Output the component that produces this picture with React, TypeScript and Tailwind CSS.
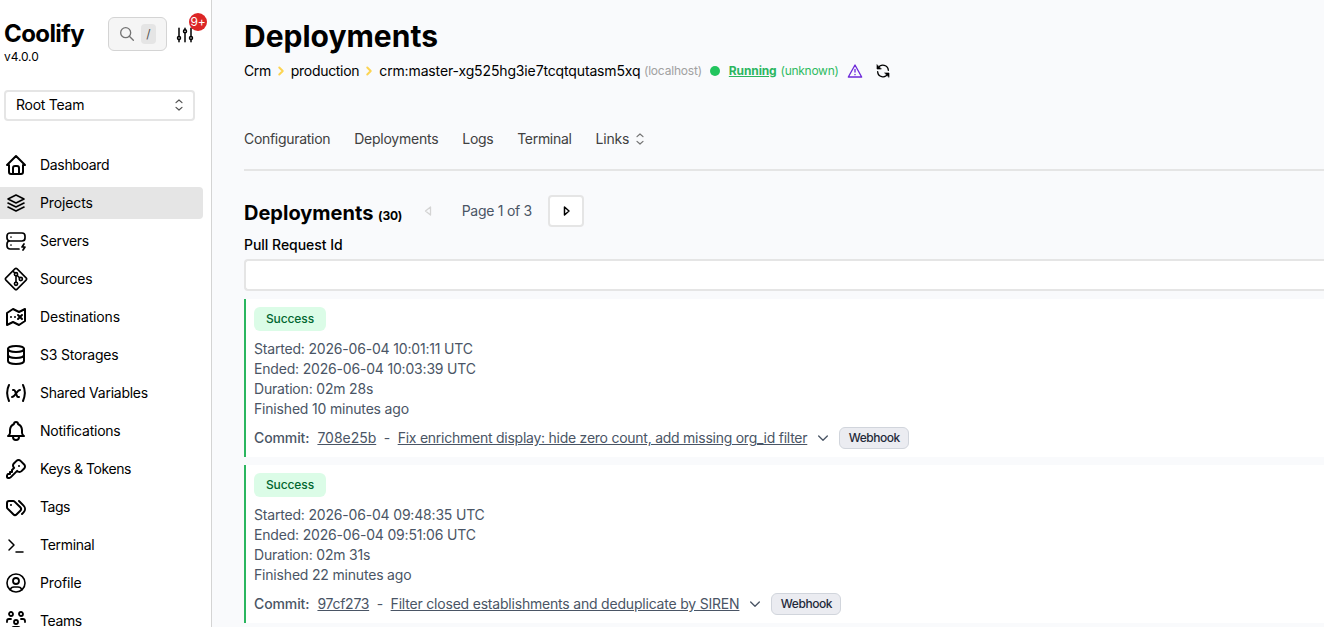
import type { ReactNode } from "react";

interface NavItem {
  label: string;
  icon: ReactNode;
  tracking: string;
  active?: boolean;
}

interface Deployment {
  id: string;
  started: string;
  ended: string;
  duration: string;
  finished: string;
  message: string;
  idTracking: string;
  messageTracking: string;
}

function Icon({ children, className = "size-6" }: { children: ReactNode; className?: string }) {
  return (
    <svg
      className={`shrink-0 ${className}`}
      viewBox="0 0 24 24"
      fill="none"
      stroke="currentColor"
      strokeWidth="2"
      strokeLinecap="round"
      strokeLinejoin="round"
    >
      {children}
    </svg>
  );
}

const NAV_ITEMS: NavItem[] = [
  {
    label: "Dashboard",
    tracking: "tracking-[-0.32px]",
    icon: (
      <Icon>
        <path d="M5 12H3l9-9l9 9h-2M5 12v7a2 2 0 0 0 2 2h10a2 2 0 0 0 2-2v-7" />
        <path d="M9 21v-6a2 2 0 0 1 2-2h2a2 2 0 0 1 2 2v6" />
      </Icon>
    ),
  },
  {
    label: "Projects",
    tracking: "tracking-[-0.12px]",
    active: true,
    icon: (
      <Icon>
        <path strokeWidth="1.6" d="m12 4l-8 4l8 4l8-4zM4 12l8 4l8-4M4 16l8 4l8-4" />
      </Icon>
    ),
  },
  {
    label: "Servers",
    tracking: "tracking-[-0.32px]",
    icon: (
      <Icon>
        <path
          strokeWidth="1.7"
          d="M3 7a3 3 0 0 1 3-3h12a3 3 0 0 1 3 3v2a3 3 0 0 1-3 3H6a3 3 0 0 1-3-3zM15 20H6a3 3 0 0 1-3-3v-2a3 3 0 0 1 3-3h12M7 8v.01M7 16v.01M20 15l-2 3h3l-2 3"
        />
      </Icon>
    ),
  },
  {
    label: "Sources",
    tracking: "tracking-[-0.28px]",
    icon: (
      <svg className="size-6 shrink-0" viewBox="0 0 15 15" fill="none" stroke="currentColor">
        <path d="M6.793 1.207L1.207 6.793a1 1 0 0 0 0 1.414l5.586 5.586a1 1 0 0 0 1.414 0l5.586-5.586a1 1 0 0 0 0-1.414L8.207 1.207a1 1 0 0 0-1.414 0Z" />
        <path d="M7.5 5.5v4M5.5 2.5L7 4M8 5l2 2" />
        <circle cx="7.5" cy="4.5" r="1" />
        <circle cx="7.5" cy="10.5" r="1" />
        <circle cx="10.5" cy="7.5" r="1" />
      </svg>
    ),
  },
  {
    label: "Destinations",
    tracking: "tracking-[-0.16px]",
    icon: (
      <Icon>
        <path d="M9 4L3 8v12l6-3l6 3l6-4V4l-6 3l-6-3zm-2 8.001V12m4 .001V12m3-2l2 2m2 2l-2-2m0 0l2-2m-2 2l-2 2" />
      </Icon>
    ),
  },
  {
    label: "S3 Storages",
    tracking: "tracking-[-0.2px]",
    icon: (
      <Icon>
        <ellipse cx="12" cy="6" rx="8" ry="3" />
        <path d="M4 6v6c0 1.657 3.582 3 8 3s8-1.343 8-3V6" />
        <path d="M4 12v6c0 1.657 3.582 3 8 3s8-1.343 8-3v-6" />
      </Icon>
    ),
  },
  {
    label: "Shared Variables",
    tracking: "tracking-[-0.25px]",
    icon: (
      <Icon>
        <path d="M5 4C2.5 9 2.5 14 5 20M19 4c2.5 5 2.5 10 0 16M9 9h1c1 0 1 1 2.016 3.527C13 15 13 16 14 16h1" />
        <path d="M8 16c1.5 0 3-2 4-3.5S14.5 9 16 9" />
      </Icon>
    ),
  },
  {
    label: "Notifications",
    tracking: "tracking-[-0.23px]",
    icon: (
      <Icon>
        <path d="M10 5a2 2 0 0 1 4 0a7 7 0 0 1 4 6v3a4 4 0 0 0 2 3H4a4 4 0 0 0 2-3v-3a7 7 0 0 1 4-6M9 17v1a3 3 0 0 0 6 0v-1" />
      </Icon>
    ),
  },
  {
    label: "Keys & Tokens",
    tracking: "tracking-[-0.41px]",
    icon: (
      <Icon>
        <path d="m16.555 3.843l3.602 3.602a2.877 2.877 0 0 1 0 4.069l-2.643 2.643a2.877 2.877 0 0 1-4.069 0l-.301-.301l-6.558 6.558a2 2 0 0 1-1.239.578L5.172 21H4a1 1 0 0 1-.993-.883L3 20v-1.172a2 2 0 0 1 .467-1.284l.119-.13L4 17h2v-2h2v-2l2.144-2.144l-.301-.301a2.877 2.877 0 0 1 0-4.069l2.643-2.643a2.877 2.877 0 0 1 4.069 0M15 9h.01" />
      </Icon>
    ),
  },
  {
    label: "Tags",
    tracking: "tracking-[-0.45px]",
    icon: (
      <Icon>
        <path d="M3 8v4.172a2 2 0 0 0 .586 1.414l5.71 5.71a2.41 2.41 0 0 0 3.408 0l3.592-3.592a2.41 2.41 0 0 0 0-3.408l-5.71-5.71A2 2 0 0 0 9.172 6H5a2 2 0 0 0-2 2" />
        <path d="m18 19l1.592-1.592a4.82 4.82 0 0 0 0-6.816L15 6M7 10h-.01" />
      </Icon>
    ),
  },
  {
    label: "Terminal",
    tracking: "tracking-[-0.3px]",
    icon: (
      <Icon>
        <path strokeWidth="1.5" d="m5 7l5 5l-5 5M12 19h7" />
      </Icon>
    ),
  },
  {
    label: "Profile",
    tracking: "tracking-[-0.15px]",
    icon: (
      <Icon>
        <circle cx="12" cy="12" r="9" strokeWidth="1.6" />
        <circle cx="12" cy="10" r="3" strokeWidth="1.8" />
        <path strokeWidth="1.6" d="M6.168 18.849A4 4 0 0 1 10 16h4a4 4 0 0 1 3.834 2.855" />
      </Icon>
    ),
  },
  {
    label: "Teams",
    tracking: "tracking-[-0.4px]",
    icon: (
      <Icon>
        <path
          strokeWidth="1.8"
          d="M10 13a2 2 0 1 0 4 0a2 2 0 0 0-4 0M8 21v-1a2 2 0 0 1 2-2h4a2 2 0 0 1 2 2v1M15 5a2 2 0 1 0 4 0a2 2 0 0 0-4 0M17 10h2a2 2 0 0 1 2 2v1M5 5a2 2 0 1 0 4 0a2 2 0 0 0-4 0M3 13v-1a2 2 0 0 1 2-2h2"
        />
      </Icon>
    ),
  },
];

const DEPLOYMENTS: Deployment[] = [
  {
    id: "708e25b",
    started: "2026-06-04 10:01:11 UTC",
    ended: "2026-06-04 10:03:39 UTC",
    duration: "02m 28s",
    finished: "10 minutes ago",
    message: "Fix enrichment display: hide zero count, add missing org_id filter",
    idTracking: "tracking-[-0.03px]",
    messageTracking: "tracking-[-0.25px]",
  },
  {
    id: "97cf273",
    started: "2026-06-04 09:48:35 UTC",
    ended: "2026-06-04 09:51:06 UTC",
    duration: "02m 31s",
    finished: "22 minutes ago",
    message: "Filter closed establishments and deduplicate by SIREN",
    idTracking: "tracking-[-0.28px]",
    messageTracking: "tracking-[-0.2px]",
  },
];

function Selector({ className }: { className: string }) {
  return (
    <svg className={className} viewBox="0 0 24 24" fill="none" stroke="currentColor" strokeWidth="1.8" strokeLinecap="round" strokeLinejoin="round">
      <path d="M7.5 15.5L12 19.5L16.5 15.5M7.5 8.5L12 4.5L16.5 8.5" />
    </svg>
  );
}

function Crumb({ children, className }: { children: ReactNode; className: string }) {
  return (
    <>
      <span className={className}>{children}</span>
      <svg className="mx-[3px] size-3.5 text-[#fcd452]" viewBox="0 0 20 20" fill="none" stroke="currentColor" strokeWidth="2.8" strokeLinecap="round" strokeLinejoin="round">
        <path d="M7.5 5l5 5l-5 5" />
      </svg>
    </>
  );
}

function Sidebar() {
  return (
    <aside className="flex h-full w-[212px] shrink-0 flex-col border-r border-[#d4d4d4] bg-white">
      <div className="flex h-[90px] shrink-0 pl-1">
        <div className="w-[104px] pt-[18px]">
          <div className="text-2xl leading-8 font-bold tracking-[-0.6px]">Coolify</div>
          <div className="text-xs leading-[14px] tracking-[-0.1px]">v4.0.0</div>
        </div>
        <div className="mt-[17px] flex h-[34px] w-[59px] items-center gap-1.5 rounded-md border border-neutral-300 bg-neutral-100 pl-2.5 text-neutral-500">
          <Icon className="size-4">
            <circle cx="10" cy="10" r="7.5" />
            <path d="m21.5 21.5l-6-6" />
          </Icon>
          <kbd className="flex h-5 w-[15px] items-center justify-center rounded bg-neutral-200 font-['Inter',sans-serif] text-xs text-neutral-600">/</kbd>
        </div>
        <div className="relative mt-[26px] ml-[9px] size-4">
          <Icon className="size-[18px]">
            <circle cx="4" cy="16" r="2" />
            <circle cx="12" cy="7" r="2" />
            <circle cx="20" cy="16" r="2" />
            <path d="M4 3v11M4 18v3M12 3v2M12 9v12M20 3v11M20 18v3" />
          </Icon>
          <span className="absolute -top-[13px] left-[13px] flex size-[18px] items-center justify-center rounded-full bg-[#dc2626] text-xs tracking-[-0.2px] text-white">9+</span>
        </div>
      </div>
      <div className="ml-1 flex h-[31px] w-[191px] shrink-0 items-center justify-between rounded border-2 border-neutral-200 pr-1.5 pb-px pl-2.5 text-sm">
        <span className="tracking-[-0.25px]">Root Team</span>
        <Selector className="size-4 text-neutral-600" />
      </div>
      <nav className="mt-7 flex flex-col gap-1.5">
        {NAV_ITEMS.map((item) => (
          <a
            key={item.label}
            className={`flex h-8 w-[203px] shrink-0 items-center gap-3 rounded-r pl-1 text-sm ${item.active ? "bg-neutral-200" : ""}`}
          >
            {item.icon}
            <span className={item.tracking}>{item.label}</span>
          </a>
        ))}
      </nav>
    </aside>
  );
}

function DeploymentCard({ deployment }: { deployment: Deployment }) {
  return (
    <article className="h-[158px] shrink-0 border-l-2 border-[#2bb65f] bg-white pt-2 pl-2 text-sm text-gray-600">
      <div className="flex h-6 w-[72px] items-center justify-center rounded-md bg-green-100 text-xs font-medium tracking-[-0.1px] text-green-800">
        Success
      </div>
      <div className="mt-2 leading-5 tracking-[-0.185px]">
        <div>Started: {deployment.started}</div>
        <div>Ended: {deployment.ended}</div>
        <div>Duration: {deployment.duration}</div>
        <div>Finished {deployment.finished}</div>
      </div>
      <div className="mt-2 flex h-[22px] items-center">
        <span className="font-medium tracking-[-0.1px]">Commit:</span>
        <a className={`ml-2 underline ${deployment.idTracking}`}>{deployment.id}</a>
        <span className="mr-[7.5px] ml-[7.5px]">-</span>
        <a className={`underline ${deployment.messageTracking}`}>{deployment.message}</a>
        <Icon className="ml-2 size-4">
          <path d="m5.5 9l6.5 6.5l6.5-6.5" />
        </Icon>
        <span className="ml-2 flex h-[22px] w-[70px] items-center justify-center rounded-md border border-gray-300 bg-[#ebecf1] text-xs font-medium tracking-[-0.45px] text-gray-800">
          Webhook
        </span>
      </div>
    </article>
  );
}

export default function App() {
  return (
    <div className="flex h-[627px] w-[1324px] overflow-hidden bg-[#f9fafc] font-['Inter',sans-serif] whitespace-nowrap text-black">
      <Sidebar />
      <main className="flex flex-1 flex-col pl-8">
        <h1 className="mt-[18px] text-3xl leading-9 font-bold">Deployments</h1>
        <div className="mt-[7px] flex h-5 items-center text-sm">
          <Crumb className="tracking-[-0.4px]">Crm</Crumb>
          <Crumb className="tracking-[-0.3px]">production</Crumb>
          <span className="tracking-[-0.14px]">crm:master-xg525hg3ie7tcqtqutasm5xq</span>
          <span className="ml-[3.5px] text-xs tracking-[-0.2px] text-neutral-400">(localhost)</span>
          <span className="ml-2 size-2.5 rounded-full bg-[#22c55e]" />
          <a className="ml-[9px] text-xs font-bold tracking-[-0.12px] text-[#2bb65f] underline">Running</a>
          <span className="ml-1 text-xs tracking-[-0.28px] text-[#2fbb62]">(unknown)</span>
          <Icon className="ml-2 size-4 text-[#6d28d9]">
            <path d="M12 3L2 21h20zM12 9.5v4M12 17v.5" />
          </Icon>
          <Icon className="ml-3 size-4">
            <path d="M20 11A8 8 0 0 0 5 7.5M4 13a8 8 0 0 0 15 3.5" />
            <path d="M3 3v6h6zM21 21v-6h-6z" fill="currentColor" strokeWidth="1" />
          </Icon>
        </div>
        <nav className="mt-12 flex h-5 items-center gap-6 text-sm text-neutral-700">
          <a className="tracking-[-0.3px]">Configuration</a>
          <a className="tracking-[-0.24px]">Deployments</a>
          <a className="tracking-[-0.35px]">Logs</a>
          <a className="tracking-[-0.3px]">Terminal</a>
          <a className="flex items-center gap-[3px] tracking-[-0.2px]">
            Links
            <Selector className="size-4 text-neutral-500" />
          </a>
        </nav>
        <div className="mt-5 h-0.5 shrink-0 bg-neutral-200" />
        <div className="mt-6 flex h-8 items-center">
          <h2 className="mt-1 text-xl leading-7 font-bold">
            Deployments <span className="text-xs tracking-[-0.2px]">(30)</span>
          </h2>
          <svg className="ml-[19.5px] size-3 text-neutral-300" viewBox="0 0 12 12" fill="none" stroke="currentColor" strokeWidth="1.3" strokeLinejoin="round">
            <path d="M8.5 2L3.5 6l5 4z" />
          </svg>
          <span className="ml-7 text-sm tracking-[-0.27px] text-gray-600">Page 1 of 3</span>
          <button className="ml-[16.5px] flex h-8 w-9 items-center justify-center rounded border-2 border-neutral-200 bg-white">
            <svg className="size-3" viewBox="0 0 12 12" fill="none" stroke="currentColor" strokeWidth="1.5" strokeLinejoin="round">
              <path d="M4.5 2L9 6L4.5 10z" />
            </svg>
          </button>
        </div>
        <label className="mt-2 text-sm leading-5 font-medium tracking-[-0.03px]">Pull Request Id</label>
        <div className="mt-1 h-8 shrink-0 rounded-l border-2 border-r-0 border-neutral-200 bg-white" />
        <section className="mt-2 flex flex-col gap-2">
          {DEPLOYMENTS.map((deployment) => (
            <DeploymentCard key={deployment.id} deployment={deployment} />
          ))}
        </section>
      </main>
    </div>
  );
}
